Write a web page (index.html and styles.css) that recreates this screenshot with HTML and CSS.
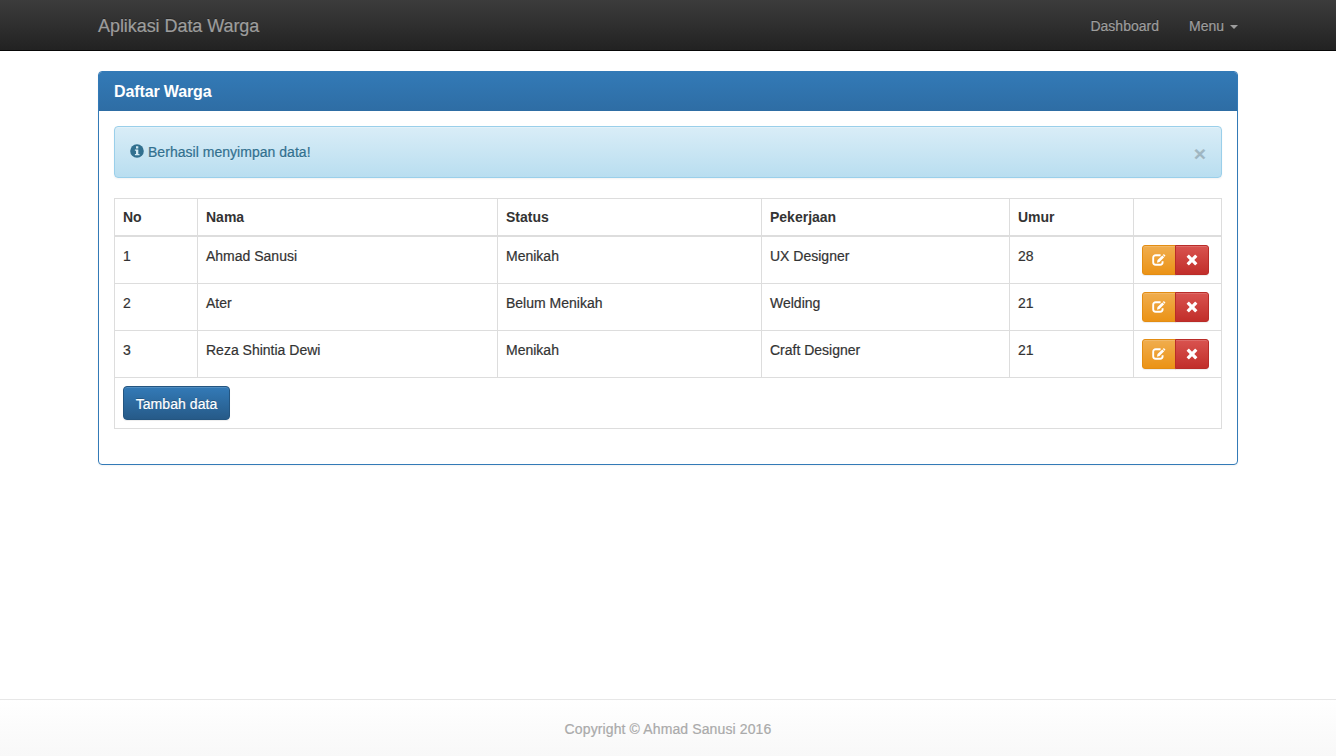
FILE: index.html
```html
<!DOCTYPE html>
<html lang="id">
<head>
<meta charset="utf-8">
<title>Aplikasi Data Warga</title>
<link rel="stylesheet" href="styles.css">
</head>
<body>
<svg width="0" height="0" class="sprite" aria-hidden="true">
  <symbol id="edit" viewBox="0 0 14 12"><path d="M8.6 1.2H3.7A2.5 2.5 0 0 0 1.2 3.7V8.3A2.5 2.5 0 0 0 3.7 10.8H8.1A2.5 2.5 0 0 0 10.6 8.3V7.2" fill="none" stroke="currentColor" stroke-width="1.9"/><path d="M5 8.7 5.5 6.1 10.3 1.4 12.2 3.2 7.5 8Z M10.8.9 11.5.2Q12 0 12.4.4L13.2 1.2Q13.5 1.6 13.2 2L12.6 2.7Z" fill="currentColor"/></symbol>
  <symbol id="remove" viewBox="0 0 12 12"><path d="M3.1.8 6 3.7 8.9.8Q9.2.5 9.5.8L11.2 2.5Q11.5 2.8 11.2 3.1L8.3 6 11.2 8.9Q11.5 9.2 11.2 9.5L9.5 11.2Q9.2 11.5 8.9 11.2L6 8.3 3.1 11.2Q2.8 11.5 2.5 11.2L.8 9.5Q.5 9.2.8 8.9L3.7 6 .8 3.1Q.5 2.8.8 2.5L2.5.8Q2.8.5 3.1.8Z" fill="currentColor"/></symbol>
</svg>
<nav class="navbar">
  <div class="container navbar-inner">
    <a class="brand">Aplikasi Data Warga</a>
    <div class="nav-links"><a>Dashboard</a><a>Menu<span class="caret"></span></a></div>
  </div>
</nav>
<main class="container">
  <section class="panel">
    <h3 class="panel-heading">Daftar Warga</h3>
    <div class="panel-body">
      <div class="alert">
        <span class="message"><svg class="info" viewBox="0 0 14 14"><circle cx="7" cy="7" r="6.8" fill="currentColor"/><path d="M6 2.3H8.3V4.4H6ZM4.9 5.5H8.3V10H9.5V11.3H4.9V10H6V6.8H4.9Z" fill="#d3eaf4"/></svg><span>Berhasil menyimpan data!</span></span>
        <button class="close">×</button>
      </div>
      <table class="table">
        <colgroup><col class="c-no"><col class="c-name"><col class="c-status"><col class="c-job"><col class="c-age"><col class="c-act"></colgroup>
        <thead><tr><th>No</th><th>Nama</th><th>Status</th><th>Pekerjaan</th><th>Umur</th><th></th></tr></thead>
        <tbody>
          <tr><td>1</td><td>Ahmad Sanusi</td><td>Menikah</td><td>UX Designer</td><td>28</td><td><div class="btn-group"><button class="btn-sm warning"><svg class="i-edit"><use href="#edit"/></svg></button><button class="btn-sm danger"><svg class="i-remove"><use href="#remove"/></svg></button></div></td></tr>
          <tr><td>2</td><td>Ater</td><td>Belum Menikah</td><td>Welding</td><td>21</td><td><div class="btn-group"><button class="btn-sm warning"><svg class="i-edit"><use href="#edit"/></svg></button><button class="btn-sm danger"><svg class="i-remove"><use href="#remove"/></svg></button></div></td></tr>
          <tr><td>3</td><td>Reza Shintia Dewi</td><td>Menikah</td><td>Craft Designer</td><td>21</td><td><div class="btn-group"><button class="btn-sm warning"><svg class="i-edit"><use href="#edit"/></svg></button><button class="btn-sm danger"><svg class="i-remove"><use href="#remove"/></svg></button></div></td></tr>
          <tr><td colspan="6"><button class="btn">Tambah data</button></td></tr>
        </tbody>
      </table>
    </div>
  </section>
</main>
<footer class="footer"><span>Copyright © Ahmad Sanusi 2016</span></footer>
</body>
</html>
```
FILE: styles.css
```css
* { box-sizing: border-box; }
body { margin: 0; height: 756px; display: flex; flex-direction: column; background: #fff; color: #333; font: 14px/20px "Liberation Sans", Arial, sans-serif; -webkit-text-stroke: .2px; overflow: hidden; }
button { font-family: inherit; }
.sprite { display: none; }
.container { width: 1140px; margin: 0 auto; }
.navbar { height: 51px; background: linear-gradient(#3c3c3c, #222); border-bottom: 1px solid #080808; color: #9d9d9d; text-shadow: 0 -1px 0 rgba(0,0,0,.25); }
.navbar-inner { height: 50px; display: flex; justify-content: space-between; align-items: center; padding-top: 2px; }
.brand { font-size: 18px; letter-spacing: -.06px; }
.nav-links { display: flex; gap: 30px; }
.caret { display: inline-block; margin-left: 6px; vertical-align: middle; border-top: 4px solid; border-left: 4px solid transparent; border-right: 4px solid transparent; }
.panel { margin-top: 20px; height: 394px; border: 1px solid #337ab7; border-radius: 4px; box-shadow: 0 1px 2px rgba(0,0,0,.05); }
.panel-heading { margin: 0; height: 39px; padding: 10px 15px 9px; font-size: 16px; font-weight: 700; letter-spacing: -.12px; -webkit-text-stroke: 0; color: #fff; background: linear-gradient(#337ab7, #2e6da4); border-radius: 3px 3px 0 0; }
.panel-body { padding: 15px; }
.alert { display: flex; justify-content: space-between; height: 52px; padding: 15px; margin-bottom: 20px; border: 1px solid #9acfea; border-radius: 4px; background: linear-gradient(#d9edf7, #b9def0); color: #31708f; text-shadow: 0 1px 0 rgba(255,255,255,.2); box-shadow: inset 0 1px 0 rgba(255,255,255,.25), 0 1px 2px rgba(0,0,0,.05); }
.message { display: flex; letter-spacing: .03px; }
.info { width: 14px; height: 14px; margin: 2px 4px 0 0; }
.close { border: 0; padding: 2px 0 0; margin: 0; background: none; font-size: 21px; font-weight: 700; line-height: 20px; height: 22px; color: #000; opacity: .2; text-shadow: 0 1px 0 #fff; }
.table { width: 1108px; table-layout: fixed; border-collapse: collapse; }
.table th, .table td { border: 1px solid #ddd; padding: 8px; text-align: left; vertical-align: top; }
.table th { border-bottom-width: 2px; -webkit-text-stroke: 0; }
.table td:not(:last-child) { padding-top: 9px; }
.c-no { width: 83px; }
.c-name { width: 300px; }
.c-status { width: 264px; }
.c-job { width: 248px; }
.c-age { width: 124px; }
.c-act { width: 88px; }
.btn-group { display: flex; height: 30px; width: 67px; }
.btn-sm { display: flex; align-items: center; justify-content: center; width: 34px; height: 30px; padding: 0; border: 1px solid; color: #fff; box-shadow: inset 0 1px 0 rgba(255,255,255,.15), 0 1px 1px rgba(0,0,0,.075); }
.warning { border-color: #e38d13; background: linear-gradient(#f0ad4e, #eb9316); border-radius: 3px 0 0 3px; }
.danger { border-color: #b92c28; background: linear-gradient(#d9534f, #c12e2a); border-radius: 0 3px 3px 0; margin-left: -1px; }
.i-edit { width: 14px; height: 12px; }
.i-remove { width: 12px; height: 12px; }
.btn { display: block; width: 107px; height: 34px; padding: 2px 0 1px; border: 1px solid #245580; border-radius: 4px; background: linear-gradient(#337ab7, #265a88); color: #fff; font-size: 14px; letter-spacing: .06px; text-shadow: 0 -1px 0 rgba(0,0,0,.2); box-shadow: inset 0 1px 0 rgba(255,255,255,.15), 0 1px 1px rgba(0,0,0,.075); }
.footer { margin-top: auto; height: 57px; border-top: 1px solid #e7e7e7; background: linear-gradient(#fff, #f8f8f8); display: flex; justify-content: center; align-items: center; padding-top: 2px; color: #aaa; letter-spacing: .12px; }
```
